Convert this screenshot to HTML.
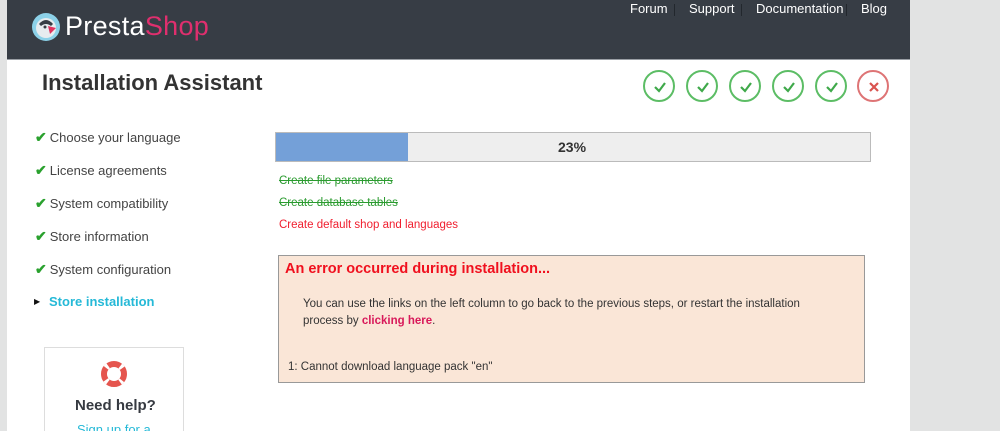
<!DOCTYPE html>
<html style="overflow:hidden;width:1000px;height:431px"><head><style>
*{margin:0;padding:0;box-sizing:border-box}
body{width:1000px;height:431px;background:#e2e3e3;font-family:"Liberation Sans",sans-serif;position:relative;overflow:hidden}
.main{position:absolute;left:7px;top:0;width:903px;height:431px;background:#fff}
.hdr{position:absolute;left:7px;top:0;width:903px;height:60px;background:#373d45;border-bottom:1px solid #9a9fa5}
.a{position:absolute;white-space:nowrap}
.nav{top:1px;color:#fff;font-size:13px}
.sep{position:absolute;top:4px;width:1px;height:12px;background:#22272d}
.side{left:35px;font-size:13px;color:#444}
.side b{color:#2aa12e;font-size:14px;margin-right:3px}
.c{position:absolute;top:70px;width:32px;height:32px;border-radius:50%;border:2px solid #5cbd65}
.c svg{position:absolute;left:8px;top:8px}
</style></head><body>
<div class="main"></div>
<div class="hdr"></div>
<svg class="a" style="left:31px;top:12px" width="30" height="30" viewBox="0 0 30 30"><circle cx="15" cy="15" r="14" fill="#8cd1e8"/><circle cx="15" cy="16" r="10" fill="#e7ecef"/><path d="M8 12 Q15 4 22 12 L20 14 Q15 10 10 14Z" fill="#373d45"/><path d="M17 14 L25 16 L19 22Z" fill="#e0335f"/><circle cx="14" cy="15" r="1.5" fill="#373d45"/></svg>
<div class="a" style="left:65px;top:11px;font-size:27px;color:#fff;letter-spacing:0.3px">Presta<span style="color:#df2f6e">Shop</span></div>
<div class="a nav" style="left:630px">Forum</div><div class="sep" style="left:674px"></div>
<div class="a nav" style="left:689px">Support</div><div class="sep" style="left:741px"></div>
<div class="a nav" style="left:756px">Documentation</div><div class="sep" style="left:846px"></div>
<div class="a nav" style="left:861px">Blog</div>
<div class="a" style="left:42px;top:70px;font-size:22px;font-weight:bold;color:#333">Installation Assistant</div>
<div class="c" style="left:643px"><svg width="14" height="14"><path d="M2 7 L6 11 L12 3" stroke="#3fa94a" stroke-width="2.2" fill="none"/></svg></div>
<div class="c" style="left:686px"><svg width="14" height="14"><path d="M2 7 L6 11 L12 3" stroke="#3fa94a" stroke-width="2.2" fill="none"/></svg></div>
<div class="c" style="left:729px"><svg width="14" height="14"><path d="M2 7 L6 11 L12 3" stroke="#3fa94a" stroke-width="2.2" fill="none"/></svg></div>
<div class="c" style="left:772px"><svg width="14" height="14"><path d="M2 7 L6 11 L12 3" stroke="#3fa94a" stroke-width="2.2" fill="none"/></svg></div>
<div class="c" style="left:815px"><svg width="14" height="14"><path d="M2 7 L6 11 L12 3" stroke="#3fa94a" stroke-width="2.2" fill="none"/></svg></div>
<div class="c" style="left:857px;border-color:#de7475"><svg width="14" height="14"><path d="M3 3 L11 11 M11 3 L3 11" stroke="#d9534f" stroke-width="2.2" fill="none"/></svg></div>
<div class="a side" style="top:129px"><b>✔</b>Choose your language</div>
<div class="a side" style="top:162px"><b>✔</b>License agreements</div>
<div class="a side" style="top:195px"><b>✔</b>System compatibility</div>
<div class="a side" style="top:228px"><b>✔</b>Store information</div>
<div class="a side" style="top:261px"><b>✔</b>System configuration</div>
<div class="a" style="left:34px;top:297px;font-size:8px;color:#111">▶</div>
<div class="a" style="left:49px;top:294px;font-size:13px;font-weight:bold;color:#25b9d7">Store installation</div>
<div class="a" style="left:44px;top:347px;width:140px;height:84px;border:1px solid #ddd;border-bottom:none;background:#fff;overflow:hidden"></div>
<svg class="a" style="left:101px;top:361px" width="26" height="26" viewBox="0 0 26 26"><circle cx="13" cy="13" r="10" fill="none" stroke="#e5554e" stroke-width="6"/><circle cx="13" cy="13" r="10" fill="none" stroke="#fff" stroke-width="6" stroke-dasharray="3 12.7" stroke-dashoffset="1.5" transform="rotate(45 13 13)"/></svg>
<div class="a" style="left:75px;top:397px;font-size:15px;font-weight:bold;color:#363a41">Need help?</div>
<div class="a" style="left:77px;top:422px;height:9px;overflow:hidden;font-size:13px;color:#25b9d7">Sign up for a</div>
<div class="a" style="left:275px;top:132px;width:596px;height:30px;border:1px solid #bbb;background:#eeeeee"></div>
<div class="a" style="left:276px;top:133px;width:132px;height:28px;background:#74a0d8"></div>
<div class="a" style="left:558px;top:139px;font-size:14px;font-weight:bold;color:#333">23%</div>
<div class="a" style="left:279px;top:175px;font-size:11.5px;color:#2a9b2f;text-decoration:line-through">Create file parameters</div>
<div class="a" style="left:279px;top:197px;font-size:11.5px;color:#2a9b2f;text-decoration:line-through">Create database tables</div>
<div class="a" style="left:279px;top:219px;font-size:11.5px;color:#f01e2e">Create default shop and languages</div>
<div class="a" style="left:278px;top:255px;width:587px;height:128px;border:1px solid #999;background:#fae6d7"></div>
<div class="a" style="left:285px;top:261px;font-size:14.5px;font-weight:bold;color:#f0101e">An error occurred during installation...</div>
<div class="a" style="left:303px;top:296px;font-size:11.5px;color:#333;line-height:17px">You can use the links on the left column to go back to the previous steps, or restart the installation<br>process by <b style="color:#d8195a">clicking here</b>.</div>
<div class="a" style="left:288px;top:361px;font-size:11.5px;color:#333">1: Cannot download language pack "en"</div>
</body></html>
